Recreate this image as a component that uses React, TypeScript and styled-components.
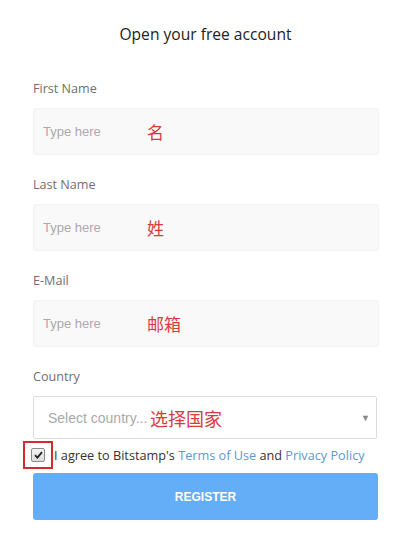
import styled, { createGlobalStyle } from 'styled-components';

const GlobalStyle = createGlobalStyle`
  html, body {
    margin: 0;
    padding: 0;
    background: #fff;
  }
  body {
    font-family: "Open Sans", "Noto Sans", sans-serif;
  }
`;

const Page = styled.div`
  width: 406px;
  height: 535px;
  box-sizing: border-box;
  padding: 24px 28px 0 33px;
  background: #fff;
`;

const Title = styled.h1`
  margin: 0 0 36px;
  font-size: 15.6px;
  line-height: 20px;
  font-weight: 400;
  color: #222;
  text-align: center;
`;

const Field = styled.div`
  display: flex;
  flex-direction: column;
  margin-bottom: 21px;
`;

const Label = styled.label`
  font-size: 12.6px;
  line-height: 18px;
  color: #6f6f6f;
  margin-bottom: 10px;
`;

const InputBox = styled.div`
  height: 47px;
  width: 346px;
  box-sizing: border-box;
  background: #f9f9f9;
  border: 1px solid #f3f3f3;
  border-radius: 3px;
  display: flex;
  align-items: center;
  padding-left: 9px;
`;

const Placeholder = styled.span<{ $w: number; $size?: number }>`
  font-family: "Liberation Sans", Arial, sans-serif;
  font-size: ${p => p.$size ?? 13}px;
  color: #a9a9a9;
  width: ${p => p.$w}px;
  flex-shrink: 0;
`;

const Note = styled.span<{ $size?: number }>`
  font-family: "Noto Sans CJK SC", sans-serif;
  font-size: ${p => p.$size ?? 17}px;
  color: #d8393f;
  line-height: 1;
`;

const Select = styled.div`
  height: 43px;
  width: 344px;
  box-sizing: border-box;
  background: #fff;
  border: 1px solid #dcdcdc;
  border-radius: 2px;
  display: flex;
  align-items: center;
  padding: 0 6px 0 14px;
`;

const Arrow = styled.span`
  margin-left: auto;
  font-size: 9px;
  color: #888;
`;

const AgreeRow = styled.div`
  display: flex;
  align-items: center;
  margin: 1px 0 3px -10px;
  height: 30px;
`;

const CheckFrame = styled.div`
  width: 30px;
  height: 28px;
  box-sizing: border-box;
  border: 2px solid #d52b2b;
  display: flex;
  align-items: center;
  justify-content: center;
`;

const CheckBox = styled.div`
  width: 12px;
  height: 12px;
  border: 1px solid #8a8a8a;
  border-radius: 2px;
  background: linear-gradient(#f4f4f4, #dcdcdc);
  display: flex;
  align-items: center;
  justify-content: center;
`;

const AgreeText = styled.span`
  font-size: 12.7px;
  color: #333;
  margin-left: 1px;
  white-space: nowrap;
`;

const Link = styled.a`
  color: #5e97cf;
  text-decoration: none;
`;

const Register = styled.button`
  width: 345px;
  height: 47px;
  border: none;
  border-radius: 3px;
  background: #64adf7;
  color: #fff;
  font-family: "Liberation Sans", Arial, sans-serif;
  font-weight: 700;
  font-size: 12px;
`;

const fields = [
  { label: 'First Name', note: '名' },
  { label: 'Last Name', note: '姓' },
  { label: 'E-Mail', note: '邮箱' },
];

export default function App() {
  return (
    <Page>
      <GlobalStyle />
      <Title>Open your free account</Title>
      {fields.map(f => (
        <Field key={f.label}>
          <Label>{f.label}</Label>
          <InputBox>
            <Placeholder $w={104}>Type here</Placeholder>
            <Note>{f.note}</Note>
          </InputBox>
        </Field>
      ))}
      <Field style={{ marginBottom: 0 }}>
        <Label>Country</Label>
        <Select>
          <Placeholder $w={102} $size={14}>Select country...</Placeholder>
          <Note $size={18}>选择国家</Note>
          <Arrow>▼</Arrow>
        </Select>
      </Field>
      <AgreeRow>
        <CheckFrame>
          <CheckBox>
            <svg width="9" height="8" viewBox="0 0 9 8">
              <path d="M1 4.2 L3.4 6.6 L8 1.2" fill="none" stroke="#222" strokeWidth="1.8" />
            </svg>
          </CheckBox>
        </CheckFrame>
        <AgreeText>
          I agree to Bitstamp's <Link href="#">Terms of Use</Link> and{' '}
          <Link href="#">Privacy Policy</Link>
        </AgreeText>
      </AgreeRow>
      <Register>REGISTER</Register>
    </Page>
  );
}
